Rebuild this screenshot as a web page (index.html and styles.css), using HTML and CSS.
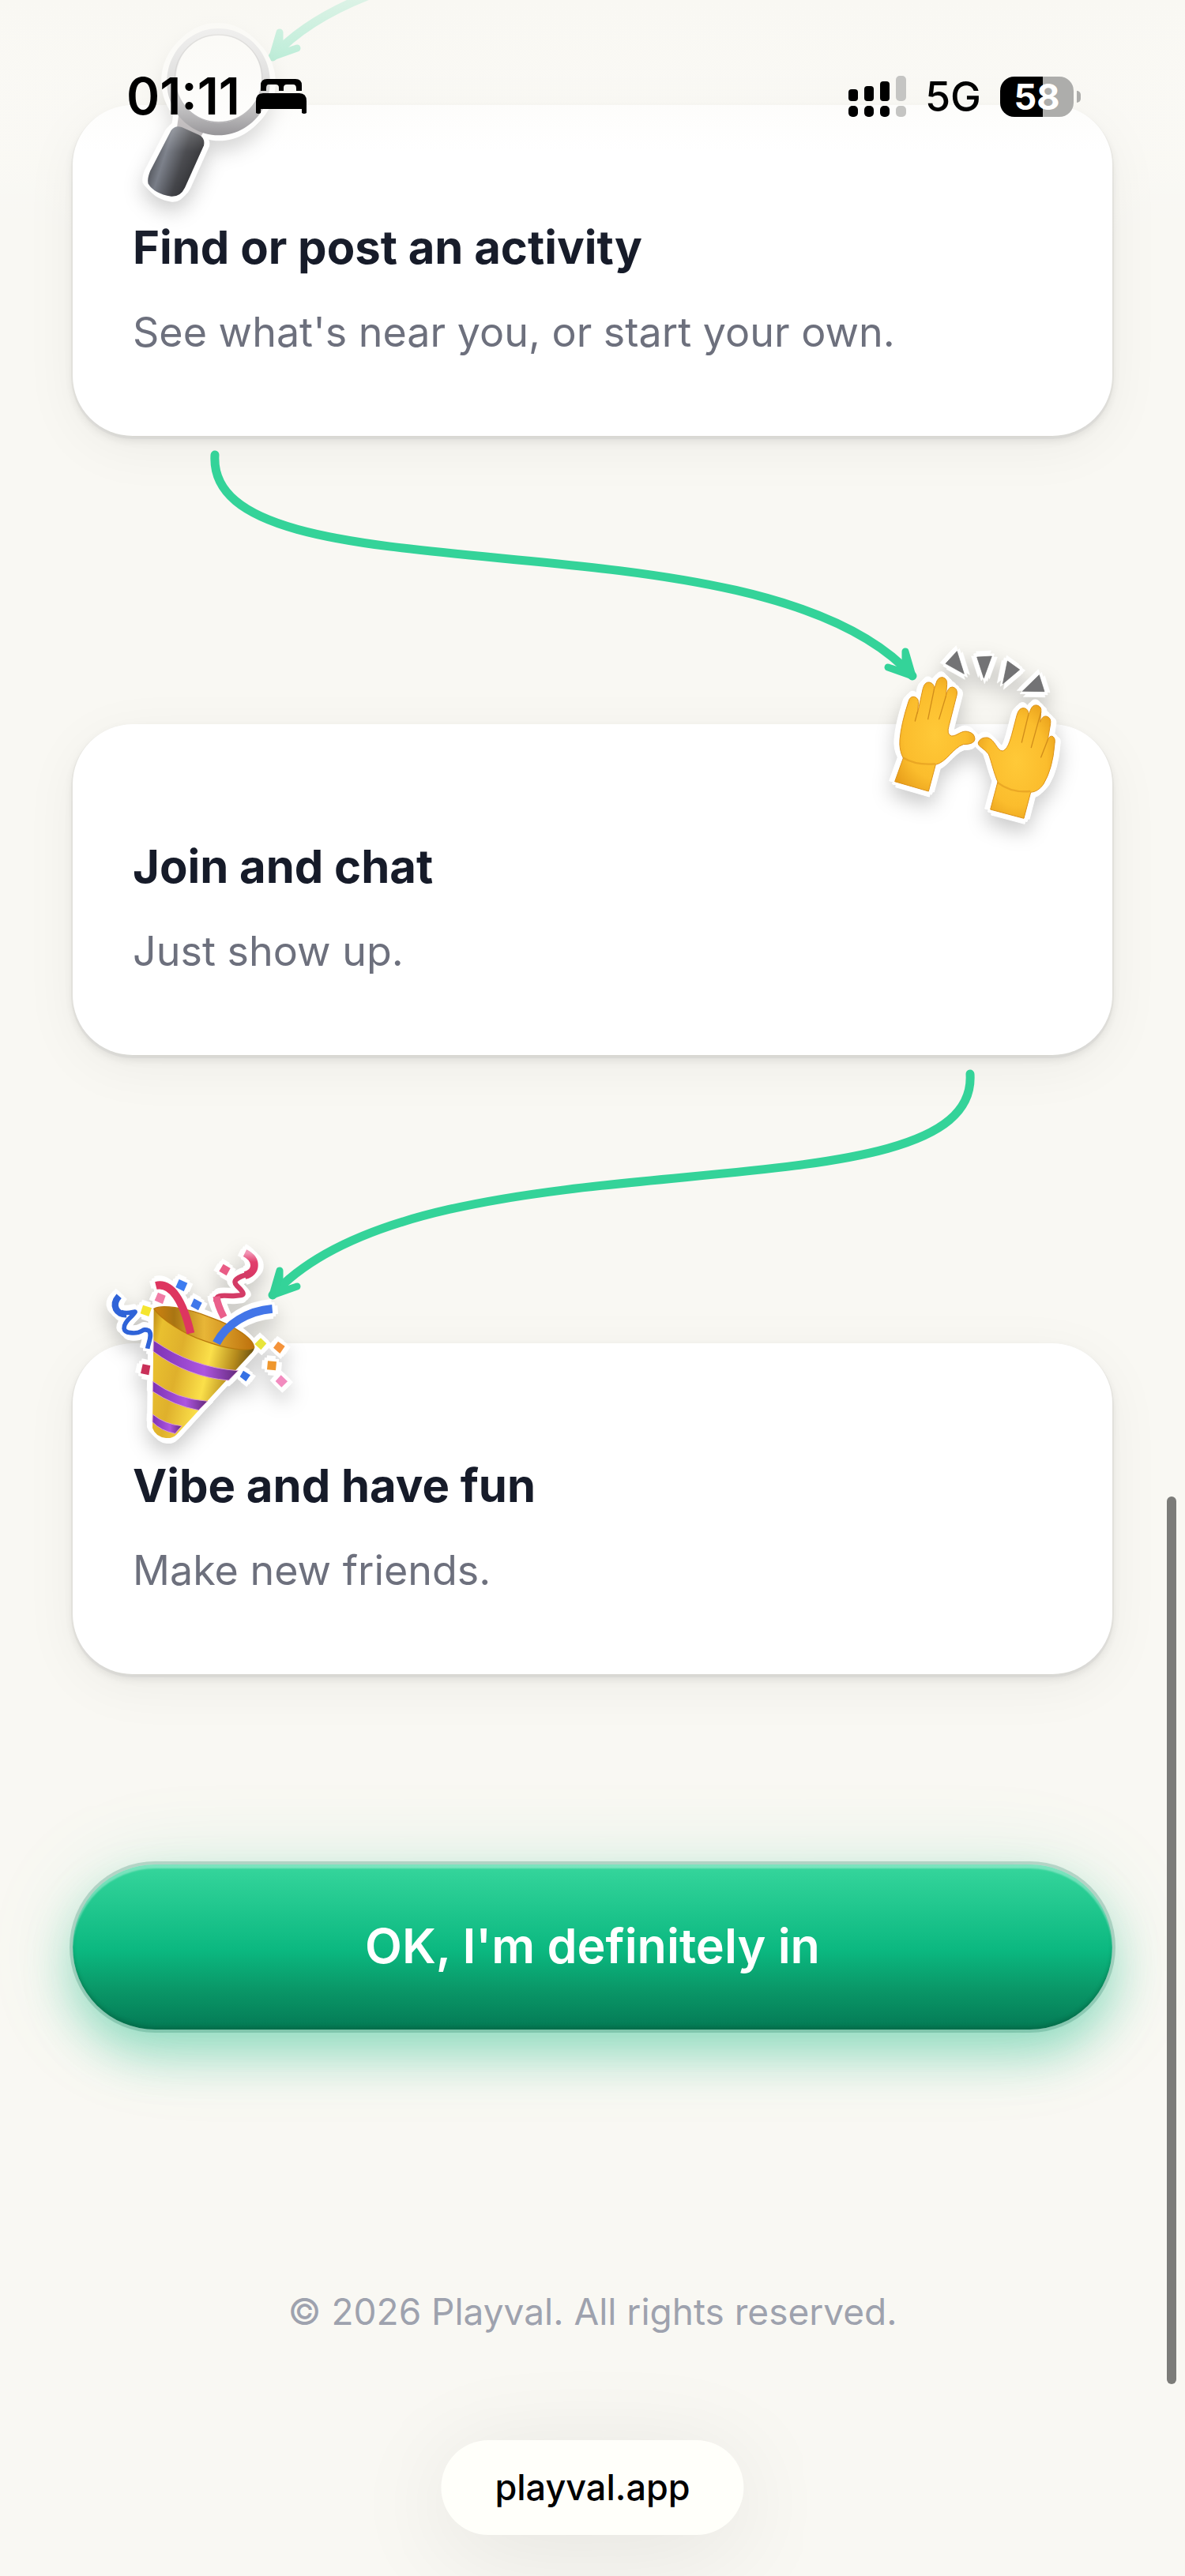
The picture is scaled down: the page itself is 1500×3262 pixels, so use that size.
FILE: index.html
```html
<!DOCTYPE html>
<html lang="en">

<head>
    <meta charset="UTF-8">
    <meta name="viewport" content="width=device-width, initial-scale=1.0">
    <title>Playval</title>

    <link rel="stylesheet" href="styles.css">
</head>

<body>

    <header class="statusbar">
        <div class="status-left">
            <span class="clock">01:11</span>
            <svg class="bed" viewBox="0 0 64 44" width="64" height="44" aria-hidden="true">
                <path d="M6 15V8q0-8 8-8h36q8 0 8 8v7h-7v-3q0-5-4-5H39q-4 0-4 4v4h-6v-4q0-4-4-4H16q-3 0-3 5v3z" />
                <path d="M0 43V28q0-10 9-10h46q9 0 9 10v15q-3 2-6 0v-5H6v5q-3 2-6 0z" />
            </svg>
        </div>
        <div class="status-right">
            <svg viewBox="0 0 73 52" width="73" height="52" aria-hidden="true">
                <rect x="0" y="38" width="12" height="14" rx="5" />
                <rect x="20" y="38" width="12" height="14" rx="5" />
                <rect x="40" y="38" width="12" height="14" rx="5" />
                <rect x="0" y="17" width="12" height="15" rx="4" />
                <rect x="20" y="13" width="12" height="19" rx="4" />
                <rect x="40" y="7" width="12" height="25" rx="4" />
                <g fill="#c5c5c3">
                    <rect x="60" y="38" width="13" height="14" rx="5" />
                    <rect x="60" y="0" width="13" height="32" rx="5" />
                </g>
            </svg>
            <span class="network">5G</span>
            <span class="battery">58</span>
        </div>
    </header>

    <main class="steps">

        <svg class="arrow arrow-cut" viewBox="0 231 1316 131" aria-hidden="true">
            <path d="M1136 23C1148 216 448 86 253 303" />
            <path class="head" d="M262 272L253 303L284 292L262 299Z" />
        </svg>

        <section class="card">
            <svg class="sticker sticker-left" viewBox="96 -27 840 840" aria-hidden="true">
                <defs>
                    <linearGradient id="ring" x1="0" y1="0" x2="0" y2="1">
                        <stop offset="0" stop-color="#cfd0da" />
                        <stop offset="0.6" stop-color="#a9a9ad" />
                        <stop offset="1" stop-color="#77757a" />
                    </linearGradient>
                    <linearGradient id="handle" x1="0" y1="0.3" x2="1" y2="0.7">
                        <stop offset="0" stop-color="#25262b" />
                        <stop offset="0.3" stop-color="#6d727d" />
                        <stop offset="0.6" stop-color="#34353a" />
                        <stop offset="1" stop-color="#131316" />
                    </linearGradient>
                </defs>
                <path d="M440 425L550 475L515 530L430 500Z" fill="#a8a3a6" />
                <path fill="url(#ring)" fill-rule="evenodd" d="M590 108a196 203 0 1 1-1 0zM590 130a162 168 0 1 0 1 0z" />
                <circle cx="590" cy="298" r="166" fill="#fff" fill-opacity="0.3" stroke="#96959a" stroke-width="4" />
                <path fill="url(#handle)" d="M410 495Q425 475 450 483L515 512Q540 524 534 553L462 713Q445 748 410 746Q345 735 323 698Q318 680 330 650Z" />
            </svg>
            <h2>Find or post an activity</h2>
            <p>See what's near you, or start your own.</p>
        </section>

        <svg class="arrow" viewBox="0 0 1316 362" aria-hidden="true">
            <path d="M180 23C168 216 868 86 1063 303" />
            <path class="head" d="M1054 272L1063 303L1032 292L1054 299Z" />
        </svg>

        <section class="card">
            <svg class="sticker sticker-right" viewBox="174 45 840 840" aria-hidden="true">
                <defs>
                    <radialGradient id="skin" cx="0.5" cy="0.5" r="0.65">
                        <stop offset="0" stop-color="#ffc938" />
                        <stop offset="0.6" stop-color="#fbbd2d" />
                        <stop offset="1" stop-color="#e59a18" />
                    </radialGradient>
                </defs>
                <g fill="#737375" stroke="#666" stroke-width="2">
                    <path d="M484 194L441 241L511 280Z" />
                    <path d="M560 216L616 213L586 296Z" />
                    <path d="M676 231L722 264L658 318Z" />
                    <path d="M796 284L733 346L816 347Z" />
                </g>
                <g fill="url(#skin)" stroke="#dc9219" stroke-width="3" stroke-linejoin="round">
                    <path d="M248 689L280 600Q264 570 267 530Q272 470 300 385Q306 364 322 367Q341 372 337 397L334 430L355 335Q362 309 380 312Q400 317 397 340L405 315Q411 292 429 293Q448 297 446 320L442 365Q449 329 467 330Q487 334 484 358L454 475Q443 512 464 516C485 516 500 494 524 499Q552 505 552 528Q550 548 508 548C470 560 445 615 403 625L376 726Z" />
                    <path d="M611 795L639 690C625 660 614 610 604 585C585 560 562 556 565 540Q574 520 600 522C630 530 635 572 657 573C683 565 690 515 712 435Q720 407 740 410Q758 415 755 437L763 418Q770 396 788 399Q807 404 803 425L800 463Q808 438 824 441Q843 447 839 470L829 530Q836 514 846 517Q859 523 855 545Q848 640 812 700Q792 728 764 730L738 829Z" />
                </g>
                <g fill="none" stroke="#d18d1b" stroke-width="4" stroke-linecap="round">
                    <path d="M334 425L325 459M397 340L374 452M442 365L416 452" />
                    <path d="M755 437L730 540M803 425L766 560M829 530L803 597" />
                </g>
                <g fill="none" stroke="#d9901a" stroke-width="7" stroke-opacity="0.5" stroke-linecap="round">
                    <path d="M282 600Q330 628 400 622M640 694Q690 732 760 726" />
                </g>
            </svg>
            <h2>Join and chat</h2>
            <p>Just show up.</p>
        </section>

        <svg class="arrow" viewBox="0 0 1316 362" aria-hidden="true">
            <path d="M1136 23C1148 216 448 86 253 303" />
            <path class="head" d="M262 272L253 303L284 292L262 299Z" />
        </svg>

        <section class="card">
            <svg class="sticker sticker-left" viewBox="36 57 840 840" aria-hidden="true">
                <defs>
                    <linearGradient id="gold" x1="0" y1="0" x2="1" y2="0.3">
                        <stop offset="0" stop-color="#b98312" />
                        <stop offset="0.12" stop-color="#e9c02f" />
                        <stop offset="0.35" stop-color="#dfb02c" />
                        <stop offset="0.62" stop-color="#fbe04a" />
                        <stop offset="0.85" stop-color="#b58a1c" />
                        <stop offset="1" stop-color="#6f5410" />
                    </linearGradient>
                    <linearGradient id="purple" x1="0" y1="0" x2="1" y2="0">
                        <stop offset="0" stop-color="#7d33b5" />
                        <stop offset="0.6" stop-color="#ad55df" />
                        <stop offset="1" stop-color="#642a7c" />
                    </linearGradient>
                    <linearGradient id="mouth" x1="0" y1="0" x2="1" y2="0">
                        <stop offset="0" stop-color="#ce8210" />
                        <stop offset="0.2" stop-color="#a97512" />
                        <stop offset="0.5" stop-color="#e8b637" />
                        <stop offset="1" stop-color="#bd700c" />
                    </linearGradient>
                    <linearGradient id="rosy" x1="0" y1="0" x2="0" y2="1">
                        <stop offset="0" stop-color="#f194b4" />
                        <stop offset="0.4" stop-color="#e23e6c" />
                        <stop offset="1" stop-color="#d93865" />
                    </linearGradient>
                </defs>
                <path fill="url(#gold)" d="M284 350L666 500Q664 512 650 525L370 830Q355 845 330 843Q290 838 279 805Z" />
                <g fill="url(#purple)" stroke="#d99ed0" stroke-width="3">
                    <path d="M283 472Q430 575 604 587L568 624Q410 610 282 514Z" />
                    <path d="M281 628Q370 695 488 703L454 737Q360 720 280 666Z" />
                    <path d="M280 753Q325 790 390 797L365 826Q310 815 279 782Z" />
                </g>
                <path fill="url(#mouth)" stroke="#b8780d" stroke-width="4" d="M285 352C310 335 400 345 500 385C600 420 665 470 665 500C640 515 560 505 480 475C400 450 310 390 285 352Z" />
                <g fill="none" stroke-linecap="butt">
                    <path d="M292 264C350 250 395 320 424 445" stroke="#de3560" stroke-width="30" />
                    <path d="M522 482C560 410 640 360 734 352" stroke="#4275e8" stroke-width="32" />
                    <path d="M152 304C120 340 145 375 180 373" stroke="#2f63d8" stroke-width="25" />
                    <path d="M160 364C195 378 235 345 200 380C155 422 170 440 195 443C245 450 235 422 265 435C280 450 265 475 260 503" stroke="#2f63d8" stroke-width="17" />
                    <path d="M630 140C680 165 675 215 630 225" stroke="url(#rosy)" stroke-width="29" />
                    <path d="M650 218C600 232 580 245 600 265C640 305 625 300 580 303C535 300 520 300 520 325" stroke="#d43b66" stroke-width="19" />
                    <path d="M522 305C525 330 535 355 550 384" stroke="#ea5f8b" stroke-width="27" />
                </g>
                <path fill="#e95c86" d="M548 182L575 198L560 226L532 209Z" />
                <path fill="#3d7cf0" d="M380 240L412 254L398 286L367 270Z" />
                <path fill="#f07ca6" d="M300 290L329 302L318 334L287 320Z" />
                <path fill="#3f78ea" d="M437 313L467 329L453 358L424 342Z" />
                <path fill="#f5e52f" d="M243 338L276 349L265 381L233 370Z" />
                <path fill="#c93059" d="M242 562L271 568L265 604L234 597Z" />
                <path fill="#e8e53b" d="M690 463L712 484L691 508L667 486Z" />
                <path fill="#f4933a" d="M756 476L782 494L763 522L738 500Z" />
                <path fill="#ef972d" d="M717 550L750 553L747 586L714 583Z" />
                <path fill="#3571e4" d="M624 587L651 604L634 628L611 610Z" />
                <path fill="#f28bbf" d="M767 604L792 628L769 650L746 627Z" />
            </svg>
            <h2>Vibe and have fun</h2>
            <p>Make new friends.</p>
        </section>

        <button type="button" class="cta">OK, I'm definitely in</button>

    </main>

    <footer class="footer">© 2026 Playval. All rights reserved.</footer>

    <a class="address" href="#">playval.app</a>

    <div class="scrollbar"></div>

</body>

</html>
```

FILE: styles.css
```css
* {
    box-sizing: border-box;
}

body {
    margin: 0;
    position: relative;
    min-height: 100vh;
    background-color: #f9f8f3;
    font-family: Inter, "Liberation Sans", sans-serif;
    color: #161b29;
}

/* status bar, fades the page out under it */

.statusbar {
    position: absolute;
    top: 0;
    left: 0;
    right: 0;
    z-index: 5;
    height: 320px;
    padding: 84px 141px 0 160px;
    display: flex;
    justify-content: space-between;
    align-items: flex-start;
    background: linear-gradient(rgba(249, 248, 243, 0.85), rgba(250, 249, 245, 0.65) 30%, rgba(255, 255, 255, 0.12) 60%, rgba(255, 255, 255, 0));
    color: #000;
}

.status-left,
.status-right {
    height: 76px;
    display: flex;
    align-items: center;
}

.status-left {
    gap: 20px;
}

.status-right {
    gap: 24px;
}

.clock {
    font-size: 64px;
    font-weight: 600;
    line-height: 76px;
}

.network {
    font-size: 52px;
    font-weight: 500;
}

.battery {
    position: relative;
    width: 93px;
    height: 51px;
    border-radius: 18px;
    background: linear-gradient(90deg, #000 58%, #adadab 58%);
    color: #fff;
    font-size: 45px;
    font-weight: 700;
    line-height: 51px;
    text-align: center;
}

.battery::after {
    content: "";
    position: absolute;
    right: -9px;
    top: 18px;
    width: 5px;
    height: 15px;
    border-radius: 0 8px 8px 0;
    background-color: #adadab;
}

/* steps */

.steps {
    padding: 0 92px;
    display: flex;
    flex-direction: column;
}

.card {
    position: relative;
    margin: 2px 0 1px;
    padding: 140px 76px 91px;
    border-radius: 76px;
    background-color: #fff;
    box-shadow: 0 2px 0 2px rgba(0, 0, 0, 0.03), 0 6px 12px rgba(0, 0, 0, 0.09), 0 15px 70px rgba(0, 0, 0, 0.05);
}

.card h2 {
    margin: 0 0 28px;
    font-size: 58px;
    font-weight: 700;
    line-height: 80px;
}

.card p {
    margin: 0;
    color: #6d707d;
    font-size: 52px;
    line-height: 80px;
}

.sticker {
    position: absolute;
    top: -142px;
    width: 280px;
    height: 280px;
    overflow: visible;
    filter: drop-shadow(4px 4px 0 #fff) drop-shadow(-4px -4px 0 #fff) drop-shadow(3px -3px 0 #fff) drop-shadow(-3px 3px 0 #fff) drop-shadow(0 12px 12px rgba(0, 0, 0, 0.2));
}

.sticker-left {
    left: 20px;
}

.sticker-right {
    right: 20px;
}

.arrow {
    position: relative;
    display: block;
    width: 100%;
    fill: none;
    stroke: #34d399;
    stroke-width: 11;
    stroke-linecap: round;
    stroke-linejoin: round;
}

.arrow .head {
    stroke-width: 9;
}

.cta {
    margin-top: 240px;
    height: 209px;
    padding: 0 0 4px;
    border: none;
    border-radius: 105px;
    background: linear-gradient(#36d69c, #0bb880 52%, #0a9868 75%, #047a55);
    box-shadow: 0 0 0 4px rgba(20, 110, 80, 0.22), inset 0 5px 2px rgba(255, 255, 255, 0.35), inset 0 -4px 4px rgba(0, 80, 50, 0.3), 0 30px 60px rgba(16, 185, 129, 0.4), 0 8px 120px rgba(16, 185, 129, 0.14);
    color: #fff;
    font-family: inherit;
    font-size: 61px;
    font-weight: 600;
}

.footer {
    padding: 321px 0 294px;
    color: #9ea2ae;
    font-size: 46px;
    line-height: 72px;
    text-align: center;
}

/* browser chrome over the page */

.address {
    position: absolute;
    bottom: 52px;
    left: 50%;
    transform: translateX(-50%);
    padding: 0 68px;
    border-radius: 60px;
    background-color: #fffffa;
    box-shadow: 0 20px 130px rgba(0, 0, 0, 0.09);
    color: #000;
    font-size: 45px;
    font-weight: 500;
    line-height: 120px;
    text-decoration: none;
}

.scrollbar {
    position: absolute;
    right: 11px;
    top: 1895px;
    width: 12px;
    height: 1124px;
    border-radius: 6px;
    background-color: #7c7c79;
}
```
